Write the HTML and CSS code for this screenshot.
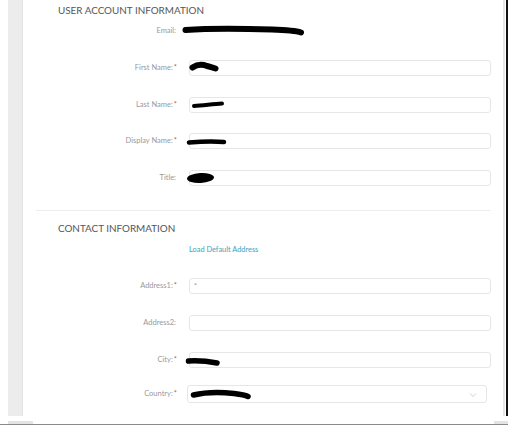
FILE: index.html
```html
<!DOCTYPE html>
<html>
<head>
<meta charset="utf-8">
<link rel="stylesheet" href="styles.css">
</head>
<body>
<div class="frame">
  <div class="gutter"></div>
  <main class="panel">
    <h2 class="section-title first">USER ACCOUNT INFORMATION</h2>

    <div class="row row-email">
      <label class="lbl">Email:<span class="noreq"></span></label>
      <div class="value plain">
        <svg class="redact r-email" width="124" height="14" viewBox="0 0 124 14"><path d="M3.5 6 C30 4 60 4.5 90 5.5 C105 6 113 6.5 119 8.5" stroke="#000" stroke-width="6" fill="none" stroke-linecap="round"/></svg>
      </div>
    </div>

    <div class="row row-first">
      <label class="lbl">First Name:<span class="req">*</span></label>
      <div class="value input">
        <svg class="redact r-first" width="30" height="12" viewBox="0 0 30 12"><path d="M3.5 6.5 C8 3.5 14 3.5 18 5 C22 6 25 7 26.5 7.5" stroke="#000" stroke-width="6" fill="none" stroke-linecap="round"/></svg>
      </div>
    </div>

    <div class="row row-last">
      <label class="lbl">Last Name:<span class="req">*</span></label>
      <div class="value input">
        <svg class="redact r-last" width="34" height="10" viewBox="0 0 34 10"><path d="M3 6 C12 5.5 22 4 31 3.5" stroke="#000" stroke-width="4" fill="none" stroke-linecap="round"/></svg>
      </div>
    </div>

    <div class="row row-display">
      <label class="lbl">Display Name:<span class="req">*</span></label>
      <div class="value input">
        <svg class="redact r-display" width="42" height="10" viewBox="0 0 42 10"><path d="M3 5.5 C14 4.5 28 4 38 5" stroke="#000" stroke-width="4.5" fill="none" stroke-linecap="round"/></svg>
      </div>
    </div>

    <div class="row row-title">
      <label class="lbl">Title:<span class="noreq"></span></label>
      <div class="value input">
        <svg class="redact r-title" width="32" height="14" viewBox="0 0 32 14"><ellipse cx="15.5" cy="7" rx="13.5" ry="5" fill="#000" transform="rotate(-3 15.5 7)"/></svg>
      </div>
    </div>

    <hr class="divider">

    <h2 class="section-title second">CONTACT INFORMATION</h2>

    <div class="row row-link">
      <span class="lbl"></span>
      <a class="link">Load Default Address</a>
    </div>

    <div class="row row-addr1">
      <label class="lbl">Address1:<span class="req">*</span></label>
      <div class="value input"><span class="ph">*</span></div>
    </div>

    <div class="row row-addr2">
      <label class="lbl">Address2:<span class="noreq"></span></label>
      <div class="value input"></div>
    </div>

    <div class="row row-city">
      <label class="lbl">City:<span class="req">*</span></label>
      <div class="value input">
        <svg class="redact r-city" width="36" height="12" viewBox="0 0 36 12"><path d="M3.5 5 C12 4.5 24 5.5 32 7" stroke="#000" stroke-width="5.5" fill="none" stroke-linecap="round"/></svg>
      </div>
    </div>

    <div class="row row-country">
      <label class="lbl">Country:<span class="req">*</span></label>
      <div class="value select">
        <svg class="redact r-country" width="62" height="12" viewBox="0 0 62 12"><path d="M3.5 6 C14 3.5 30 3 44 4.5 C52 5.5 56 6.5 58 7.5" stroke="#000" stroke-width="5.5" fill="none" stroke-linecap="round"/></svg>
        <svg class="chev" width="8" height="6" viewBox="0 0 8 6"><path d="M1 1.5 L4 4.5 L7 1.5" stroke="#cfcfcf" stroke-width="1" fill="none"/></svg>
      </div>
    </div>
  </main>
  <div class="scroll">
    <div class="scroll-track"></div>
    <div class="scroll-gap"></div>
    <div class="scroll-edge"></div>
  </div>
</div>
<div class="bottom">
  <div class="bottom-bars">
    <span class="bb bb-left"></span>
    <span class="bb bb-right"></span>
  </div>
  <div class="bottom-line"></div>
</div>
</body>
</html>
```

FILE: styles.css
```css
* { box-sizing: border-box; }
html, body { margin: 0; padding: 0; background: #fff; }
body {
  width: 508px;
  height: 427px;
  overflow: hidden;
  font-family: Lato, "Open Sans", "Liberation Sans", sans-serif;
}
.frame {
  display: flex;
  height: 416px;
  padding-left: 8px;
}
.gutter {
  width: 15px;
  background: #ececec;
  border-right: 1px solid #e2e2e2;
}
.panel {
  width: 480px;
  background: #fff;
  display: flex;
  flex-direction: column;
}
.scroll {
  display: flex;
  width: 5px;
}
.scroll-track { width: 2px; background: #e6e6e6; }
.scroll-gap { width: 1px; background: #fff; }
.scroll-edge { width: 2px; background: #111; }

.section-title {
  margin: 0;
  padding-left: 35px;
  font-size: 9.9px;
  line-height: 12px;
  font-weight: 400;
  color: #555;
  letter-spacing: 0;
}
.section-title.first { margin-top: 4px; }
.section-title.second { margin-top: 10.5px; }

.row {
  display: grid;
  grid-template-columns: 154px 302px;
  column-gap: 12px;
  align-items: center;
  height: 16px;
}
.row-email { margin-top: 7px; }
.row-first { margin-top: 21px; }
.row-last, .row-display, .row-title { margin-top: 20.5px; }
.row-link { margin-top: 11.5px; height: 10px; }
.row-addr1 { margin-top: 23.3px; }
.row-addr2, .row-city { margin-top: 20.7px; }
.row-country { margin-top: 17.3px; height: 18px; grid-template-columns: 154px 300px; column-gap: 10px; }

.lbl {
  text-align: right;
  font-size: 7.5px;
  line-height: 10px;
  color: #999;
  white-space: nowrap;
}
.req { color: #d9534f; margin-left: 1px; }
.noreq { display: inline-block; width: 1px; }

.value { position: relative; height: 100%; }
.input, .select {
  border: 1px solid #e6e6e6;
  border-radius: 3px;
  background: #fff;
}
.ph {
  position: absolute;
  left: 4px;
  top: 2px;
  font-size: 7px;
  line-height: 10px;
  color: #999;
}
.link {
  font-size: 7.4px;
  line-height: 10px;
  color: #3aa3bd;
  text-decoration: none;
}

.divider {
  margin: 24.5px 0 0 13px;
  width: 455px;
  border: 0;
  height: 1px;
  background: #ededed;
}

.redact { position: absolute; display: block; }
.r-email { left: -7px; top: 1px; }
.r-first { left: -1px; top: 0px; }
.r-last { left: 1px; top: 2px; }
.r-display { left: -4px; top: 3px; }
.r-title { left: -5px; top: 0px; }
.r-city { left: -5px; top: 3px; }
.r-country { left: 2px; top: 3px; }
.chev { position: absolute; right: 9px; top: 6px; }

.bottom {
  height: 11px;
  display: flex;
  flex-direction: column;
  justify-content: flex-end;
  padding-bottom: 2px;
}
.bottom-bars {
  display: flex;
  justify-content: space-between;
  height: 3px;
  padding-left: 8px;
}
.bb { display: block; background: #e4e4e4; height: 3px; }
.bb-left { width: 25px; }
.bb-right { width: 14px; }
.bottom-line { height: 1px; background: #8a8a8a; }
```
